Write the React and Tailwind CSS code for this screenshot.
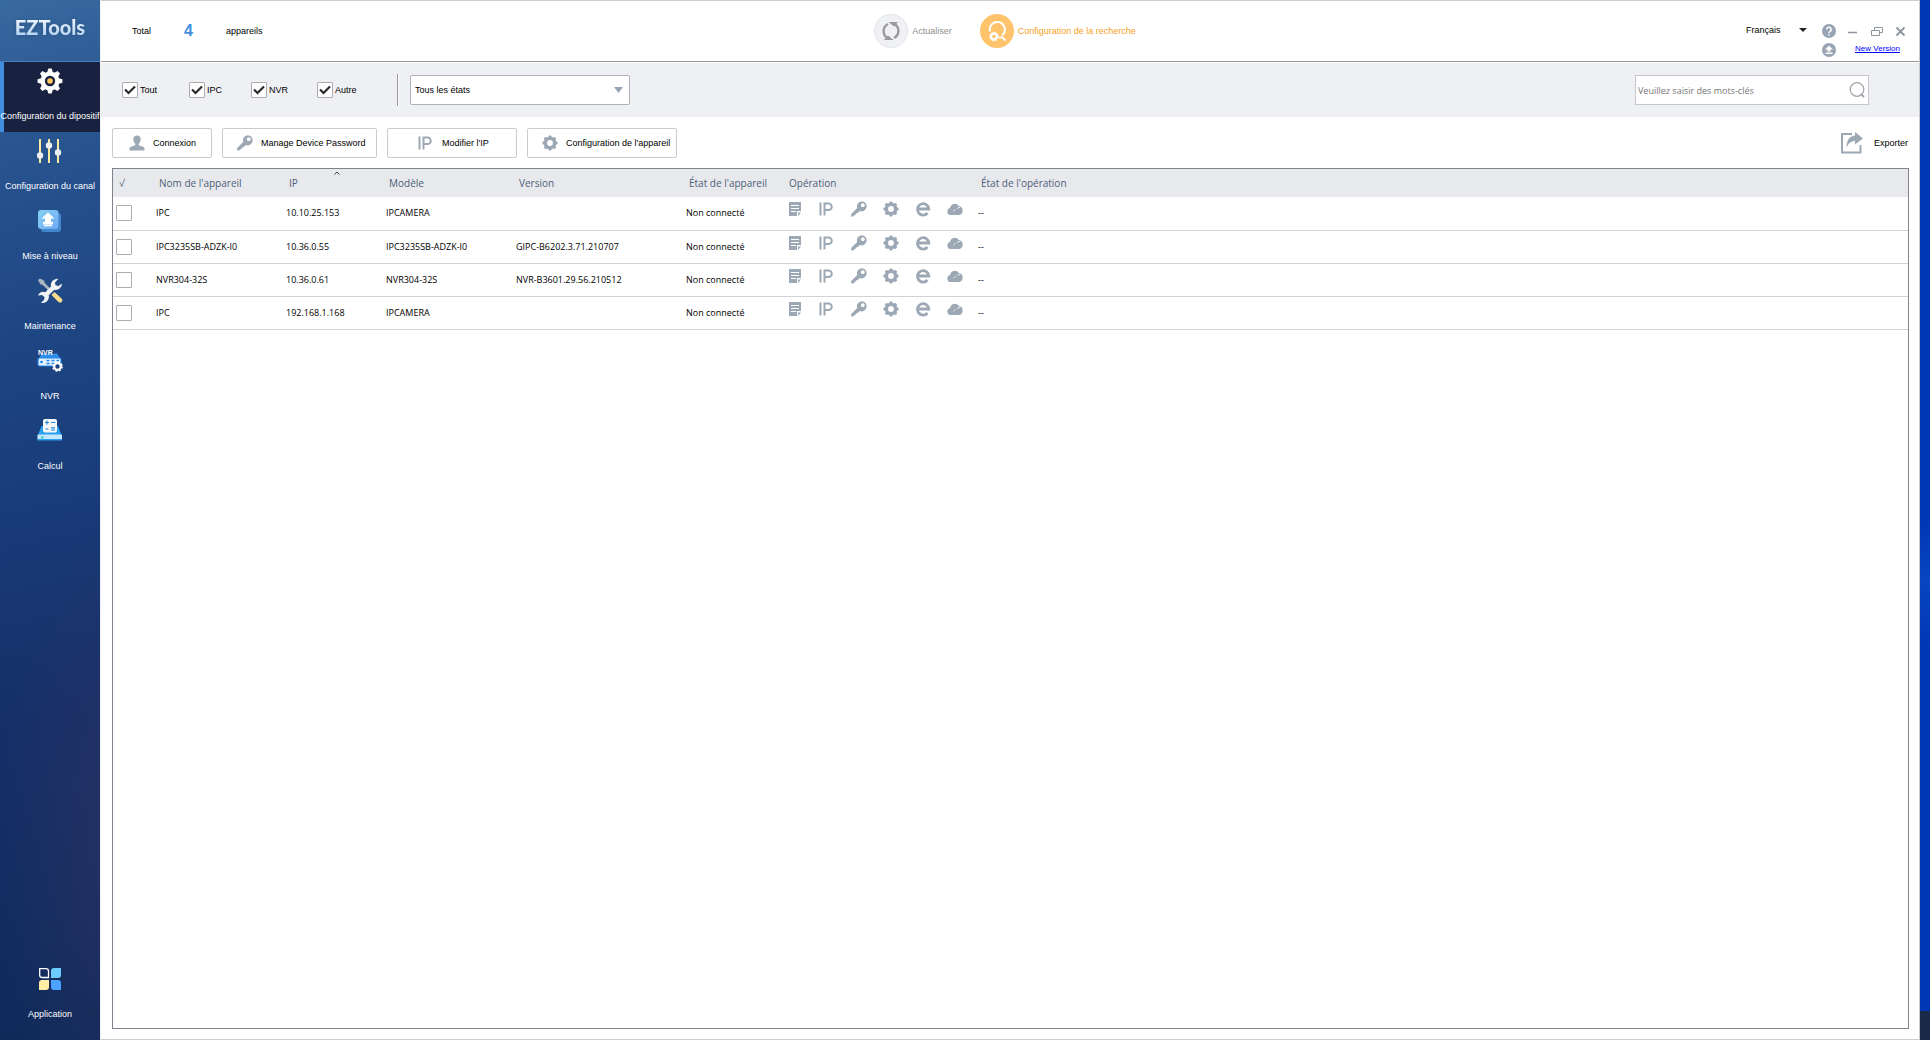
import { useState } from "react";

const DEVICES = [
  { id: 1, name: "IPC", ip: "10.10.25.153", model: "IPCAMERA", version: "" },
  { id: 2, name: "IPC3235SB-ADZK-I0", ip: "10.36.0.55", model: "IPC3235SB-ADZK-I0", version: "GIPC-B6202.3.71.210707" },
  { id: 3, name: "NVR304-32S", ip: "10.36.0.61", model: "NVR304-32S", version: "NVR-B3601.29.56.210512" },
  { id: 4, name: "IPC", ip: "192.168.1.168", model: "IPCAMERA", version: "" },
];

const TOOTH_ANGLES = [0, 45, 90, 135, 180, 225, 270, 315];

function GearNavIcon() {
  return (
    <svg className="size-[26px]" viewBox="0 0 26 26">
      <g fill="#fff">
        <circle cx="13" cy="13" r="9.500" />
        {TOOTH_ANGLES.map((angle) => (
          <path key={angle} d="M11.300 .6h3.400l1.300 4.400h-6z" transform={`rotate(${angle} 13 13)`} />
        ))}
      </g>
      <circle cx="13" cy="13" r="5.200" fill="#18213f" />
      <circle cx="13" cy="13" r="2.800" fill="#ffc95c" />
    </svg>
  );
}

function SlidersIcon() {
  return (
    <svg className="size-[26px]" viewBox="0 0 26 26">
      <g fill="#fbe9a0">
        <rect x="2" y="1" width="2" height="24" />
        <rect x="11" y="1" width="2" height="24" />
        <rect x="20" y="1" width="2" height="24" />
      </g>
      <g fill="#eceef2">
        <circle cx="3" cy="17.500" r="3.200" />
        <circle cx="12" cy="7.500" r="3.200" />
        <circle cx="21" cy="14.500" r="3.200" />
      </g>
    </svg>
  );
}

function UpgradeIcon() {
  return (
    <svg className="size-[26px]" viewBox="0 0 26 26">
      <defs>
        <linearGradient id="upgrade" x1="0" y1="0" x2="1" y2="1">
          <stop offset="0" stopColor="#86d3f2" />
          <stop offset="1" stopColor="#6fa8f5" />
        </linearGradient>
      </defs>
      <rect x="4" y="5" width="20" height="19" rx="3" fill="#4387cc" />
      <rect x="1" y="2" width="20.500" height="19" rx="3" fill="url(#upgrade)" />
      <path d="M11 4.500l6.500 6H14V14h2v2.500H6V14h2v-3.500H4.500z" fill="#fff" />
      <path d="M7 17.500h8" stroke="#fff" strokeWidth="1.500" />
    </svg>
  );
}

function ToolsIcon() {
  return (
    <svg className="size-[26px]" viewBox="0 0 26 26">
      <path d="M1 2l2-1.500 4 2 .8 2.600 6 6-2 2-6-6-2.600-.8z" fill="#a9b4c0" />
      <path d="M14.500 17l3-3 7 6.500a2 2 0 0 1-3 3.500z" fill="#fbdc8c" />
      <path
        d="M25 5.500l-3.500 2.500-3-.8-.5-2.800L21.300 1A6.200 6.200 0 0 0 14 8.500L8.300 14.200A6.200 6.200 0 0 0 1 17.500l4-.5 2.500 2-.3 2.800L4 24.800a6.200 6.200 0 0 0 7.700-7.500l5.600-5.600A6.200 6.200 0 0 0 25 5.500z"
        fill="#f1f2f4"
      />
    </svg>
  );
}

function NvrIcon() {
  return (
    <svg className="size-[26px]" viewBox="0 0 26 26">
      <path d="M5 5.500h15l4 6H.8z" fill="#2f8eea" />
      <text x="1" y="6.500" className="font-['Liberation_Sans'] text-[7px] font-bold" fill="#fff">NVR</text>
      <rect x="1" y="10" width="23" height="8" rx="1.500" fill="#e4f1ff" stroke="#1e83ea" strokeWidth="1.200" />
      <circle cx="4.500" cy="14" r="1.300" fill="#1e83ea" />
      <path d="M9.500 12.500h3m2 0h3m2 0h2.500M9.500 15.500h3m2 0h3" stroke="#1e83ea" strokeWidth="1.300" />
      <circle cx="20.500" cy="18.500" r="3.300" fill="#1a4080" stroke="#fff" strokeWidth="2.200" />
      <circle cx="20.500" cy="18.500" r="4.600" fill="none" stroke="#fff" strokeWidth="1.500" strokeDasharray="2 1.600" />
    </svg>
  );
}

function CalculIcon() {
  return (
    <svg className="size-[26px]" viewBox="0 0 26 26">
      <path d="M4.500 8h16.500l4 10H.5z" fill="#2ba0f0" />
      <rect x=".5" y="16.500" width="24.500" height="5.500" rx="1" fill="#c6e6fb" />
      <path d="M.5 21h24.500v1.500H.5z" fill="#2ba0f0" />
      <rect x="4" y="18.500" width="2.500" height="2" fill="#27d3b4" />
      <rect x="6" y="1" width="14" height="13.500" rx="2" fill="#f4f6f8" />
      <path d="M8 4.500h4M10 2.500v4M14 4.500h4.500M8.500 11h3M14 9.800h4M14 12h4" stroke="#2487d8" strokeWidth="1.200" />
    </svg>
  );
}

function AppsIcon() {
  return (
    <svg className="size-[26px]" viewBox="0 0 26 26">
      <path d="M2.700 2.700h6.300a2.500 2.500 0 0 1 2.500 2.500v6.300H5.200a2.500 2.500 0 0 1-2.500-2.500z" fill="none" stroke="#fff" strokeWidth="1.300" />
      <path d="M17 2h7v7a3 3 0 0 1-3 3h-7V5a3 3 0 0 1 3-3z" fill="#6ccbff" />
      <path d="M5 14h7v7a3 3 0 0 1-3 3H2v-7a3 3 0 0 1 3-3z" fill="#ffeda3" />
      <path d="M14 14h7a3 3 0 0 1 3 3v7h-7a3 3 0 0 1-3-3z" fill="#4ba3ff" />
    </svg>
  );
}

function UserIcon() {
  return (
    <svg className="size-4" viewBox="0 0 16 16" fill="currentColor">
      <path d="M8 .5c2.400 0 3.700 1.500 3.700 3.700 0 1.900-.7 3.500-1.900 4.300v1.700l4.700 1.700c.8.3 1 1 1 2v1.600H.5v-1.600c0-1 .2-1.700 1-2l4.700-1.700V8.500C5 7.700 4.300 6.100 4.300 4.200 4.300 2 5.600.5 8 .5z" />
    </svg>
  );
}

function KeyIcon() {
  return (
    <svg className="size-4" viewBox="0 0 16 16" fill="currentColor" fillRule="evenodd">
      <path d="M10.700 .2a5.100 5.100 0 1 1-1.900 9.900L6.500 12.300l-1.700.2-.3 1.500-1.600.4-.4 1.200H.2v-2.500l6-6.200A5.100 5.100 0 0 1 10.700.2zM11.800 2.300a1.900 1.900 0 1 0 .01 0z" />
    </svg>
  );
}

function IpIcon() {
  return (
    <svg className="h-4 w-[14px]" viewBox="0 0 14 16" fill="none" stroke="currentColor" strokeWidth="2">
      <path d="M1.500 1.500v13M5.500 14.500v-12h4a3.200 3.200 0 0 1 0 6.500h-4" />
    </svg>
  );
}

function CogIcon() {
  return (
    <svg className="size-4" viewBox="0 0 16 16" fill="currentColor">
      <circle cx="8" cy="8" r="4.500" fill="none" stroke="currentColor" strokeWidth="3.200" />
      {TOOTH_ANGLES.map((angle) => (
        <path key={angle} d="M7 .4h2l1.600 2.800H5.400z" transform={`rotate(${angle} 8 8)`} />
      ))}
    </svg>
  );
}

function NoteIcon() {
  return (
    <svg className="size-4" viewBox="0 0 16 16" fill="currentColor">
      <path d="M2 1h12v9h-4v5H2z" />
      <path d="M11 11.500h3L11 15z" />
      <path d="M4 4.500h8M4 7.500h8M4 10.500h5" stroke="#fff" strokeWidth="1" />
    </svg>
  );
}

function BrowserIcon() {
  return (
    <svg className="size-4" viewBox="0 0 16 16" fill="none" stroke="currentColor" strokeWidth="2.800">
      <path d="M2.500 8h11.300a5.700 5.700 0 1 0-1.300 4" />
    </svg>
  );
}

function CloudIcon() {
  return (
    <svg className="size-4" viewBox="0 0 16 16">
      <path d="M3.800 14a3.500 3.500 0 0 1-.8-6.900A4.800 4.800 0 0 1 11.800 5a4.600 4.600 0 0 1 .4 9z" fill="currentColor" />
      <path d="M6.500 10c1-.2 1.500-1 2-1.800M10 7.800c.8-.8 1.500-1.200 3-1.400" stroke="#fff" strokeWidth=".8" fill="none" />
    </svg>
  );
}

const NAV = [
  { label: "Configuration du dipositif", icon: GearNavIcon, active: true },
  { label: "Configuration du canal", icon: SlidersIcon },
  { label: "Mise à niveau", icon: UpgradeIcon },
  { label: "Maintenance", icon: ToolsIcon },
  { label: "NVR", icon: NvrIcon },
  { label: "Calcul", icon: CalculIcon },
];

const OPERATIONS = [
  { title: "Détails", icon: NoteIcon },
  { title: "Modifier l'IP", icon: IpIcon },
  { title: "Mot de passe", icon: KeyIcon },
  { title: "Configuration", icon: CogIcon },
  { title: "Navigateur", icon: BrowserIcon },
  { title: "Cloud", icon: CloudIcon },
];

function NavItem({ label, icon: Icon, active }) {
  return (
    <a
      href="#"
      className={
        active
          ? "relative flex h-[70px] flex-col items-center bg-[#18213f] pt-1.5"
          : "relative flex h-[70px] flex-col items-center pt-1.5"
      }
    >
      {active && <span className="absolute inset-y-0 left-0 w-1 bg-[#3f8ee0]" />}
      <Icon />
      <span className="relative mt-4 text-[9px] leading-3 whitespace-nowrap text-white">{label}</span>
    </a>
  );
}

function Sidebar() {
  return (
    <aside className="flex w-[100px] shrink-0 flex-col bg-[radial-gradient(ellipse_120px_330px_at_120%_82%,#37346388,transparent),linear-gradient(168deg,#38699f_0%,#28548f_14%,#1e4683_32%,#193b79_48%,#153069_68%,#0e2a59_100%)]">
      <div className="flex h-[62px] items-center justify-center border-b border-[#4a80bf] pb-2">
        <span className="bg-linear-to-b from-white to-[#a9cdf0] bg-clip-text font-['Lato'] text-[20px] leading-6 font-black text-transparent drop-shadow-sm">
          EZTools
        </span>
      </div>
      <nav className="flex grow flex-col">
        {NAV.map((item) => (
          <NavItem key={item.label} {...item} />
        ))}
        <div className="mt-auto pb-2.5">
          <NavItem label="Application" icon={AppsIcon} />
        </div>
      </nav>
    </aside>
  );
}

function CheckBox({ checked, onChange, label }) {
  return (
    <span className="relative flex size-4 shrink-0">
      <input
        type="checkbox"
        aria-label={label}
        checked={checked}
        onChange={onChange}
        className="size-4 appearance-none rounded-[1px] border border-[#adadb0] bg-white"
      />
      {checked && (
        <svg className="pointer-events-none absolute inset-0 size-4" viewBox="0 0 16 16">
          <path d="M3 7.500l3.500 3.500L13 4.500" fill="none" stroke="#2a2a2e" strokeWidth="2.200" />
        </svg>
      )}
    </span>
  );
}

function Header() {
  return (
    <header className="grid h-[62px] shrink-0 grid-cols-[1fr_auto_1fr] items-center border-t border-b border-t-[#cccccc] border-b-[#96969c]">
      <div className="flex items-center pl-[31px]">
        <span className="w-[52px]">Total</span>
        <span className="w-[42px] text-[16px] leading-5 font-bold text-[#3f8ee0]">4</span>
        <span>appareils</span>
      </div>

      <div className="flex items-center gap-7 pr-2.5">
        <button type="button" className="flex items-center gap-1 text-[#8e8e8e]">
          <svg className="size-[34px]" viewBox="0 0 34 34">
            <circle cx="17" cy="17" r="16.500" fill="#f0f1f5" stroke="#e2e3e8" />
            <path d="M14 10a8 8 0 0 0-.5 14M20 24a8 8 0 0 0 .5-14" fill="none" stroke="#9a9a9a" strokeWidth="2.400" />
            <path d="M14.500 8h9.500l-4 4.500zM19.500 26h-9.500l4-4.500z" fill="#9a9a9a" />
          </svg>
          Actualiser
        </button>
        <button type="button" className="flex items-center gap-1 text-[#f5a122]">
          <svg className="size-[34px]" viewBox="0 0 34 34" fill="none" stroke="#fff" strokeWidth="2">
            <circle cx="17" cy="17" r="17" fill="#ffc36b" stroke="none" />
            <path d="M10 17.500a7.600 7.600 0 1 1 12 4M19 23.500h3.500l3 3" />
            <circle cx="14" cy="22.500" r="3" strokeWidth="2.400" />
            <circle cx="14" cy="22.500" r="4.300" strokeWidth="1" strokeDasharray="2 1.400" />
          </svg>
          Configuration de la recherche
        </button>
      </div>

      <div className="flex items-start justify-end pt-[18px] pr-[11px]">
        <div className="relative flex items-center">
          <select aria-label="Langue" className="w-[61px] appearance-none bg-transparent leading-3" defaultValue="fr">
            <option value="fr">Français</option>
            <option value="en">English</option>
          </select>
          <svg className="pointer-events-none absolute right-0 h-1 w-2" viewBox="0 0 8 4">
            <path d="M0 0h8l-4 4z" fill="#222" />
          </svg>
        </div>
        <div className="ml-[15px] flex flex-col gap-[5px] text-[#98a4b3]">
          <button type="button" aria-label="Aide">
            <svg className="size-[14px]" viewBox="0 0 14 14">
              <circle cx="7" cy="7" r="7" fill="currentColor" />
              <path d="M4.800 5.500a2.200 2.200 0 1 1 3.300 1.900c-.8.4-1.100.7-1.100 1.500M7 10v1.500" fill="none" stroke="#fff" strokeWidth="1.500" />
            </svg>
          </button>
          <button type="button" aria-label="Mise à jour">
            <svg className="size-[14px]" viewBox="0 0 14 14">
              <circle cx="7" cy="7" r="7" fill="currentColor" />
              <path d="M7 2.500l4 4H8.500v2h-3v-2H3zM3.500 9.500h7V11h-7z" fill="#fff" />
            </svg>
          </button>
        </div>
        <div className="flex flex-col items-end gap-[5px]">
          <div className="flex gap-2.5 text-[#8f959c]">
            <button type="button" aria-label="Réduire">
              <svg className="size-[14px]" viewBox="0 0 14 14"><path d="M2 8.500h9" stroke="currentColor" strokeWidth="1.500" /></svg>
            </button>
            <button type="button" aria-label="Restaurer">
              <svg className="size-[14px]" viewBox="0 0 14 14" fill="none" stroke="currentColor">
                <path d="M1.500 6.500h8v5h-8zM4.500 6.500v-3h8v5h-3" />
              </svg>
            </button>
            <button type="button" aria-label="Fermer">
              <svg className="size-[14px]" viewBox="0 0 14 14">
                <path d="M2.500 3.500l8 8M10.500 3.500l-8 8" stroke="currentColor" strokeWidth="1.800" />
              </svg>
            </button>
          </div>
          <a href="#" className="mr-2 ml-[19px] text-[8px] leading-3 text-[#0000ff] underline">New Version</a>
        </div>
      </div>
    </header>
  );
}

function Filters() {
  const [types, setTypes] = useState({ Tout: true, IPC: true, NVR: true, Autre: true });

  return (
    <section className="mt-px flex h-[54px] shrink-0 items-center bg-[#eff0f4] pr-[50px] pl-[21px]">
      <div className="grid grid-cols-[67px_62px_66px_80px]">
        {Object.keys(types).map((type) => (
          <label key={type} className="flex items-center gap-0.5">
            <CheckBox
              label={type}
              checked={types[type]}
              onChange={() => setTypes((old) => ({ ...old, [type]: !old[type] }))}
            />
            {type}
          </label>
        ))}
      </div>
      <div className="h-8 w-0.5 border-r border-l border-r-white border-l-[#98989c]" />
      <div className="relative ml-[11px] flex items-center">
        <select
          aria-label="État"
          className="h-[30px] w-[220px] appearance-none rounded-xs border border-[#b0b1b6] bg-white pl-1"
          defaultValue="all"
        >
          <option value="all">Tous les états</option>
          <option value="online">Connecté</option>
          <option value="offline">Non connecté</option>
        </select>
        <svg className="pointer-events-none absolute right-[7px] h-1.5 w-[9px]" viewBox="0 0 9 6">
          <path d="M0 0h9L4.500 6z" fill="#98a4b3" />
        </svg>
      </div>
      <div className="relative ml-auto flex items-center">
        <input
          type="text"
          aria-label="Recherche"
          placeholder="Veuillez saisir des mots-clés"
          className="h-[30px] w-[234px] border border-[#c6c7cb] bg-white pr-6 pl-0.5 font-['Open_Sans',sans-serif] placeholder:text-[#777]"
        />
        <svg className="pointer-events-none absolute right-1 size-4" viewBox="0 0 16 16" fill="none" stroke="#a3a7ad" strokeWidth="1.300">
          <circle cx="8" cy="7.500" r="6.800" />
          <path d="M12 12l3 3" strokeWidth="2" />
        </svg>
      </div>
    </section>
  );
}

function ToolButton({ icon: Icon, className, children }) {
  return (
    <button type="button" className={`flex h-[30px] items-center rounded-xs border border-[#cbcbcd] bg-white ${className}`}>
      <span className="text-[#9da8b5]"><Icon /></span>
      {children}
    </button>
  );
}

function Toolbar() {
  return (
    <section className="flex h-[51px] shrink-0 items-center gap-2.5 pr-[11px] pl-[11px]">
      <ToolButton icon={UserIcon} className="w-[100px] gap-2 pl-4">Connexion</ToolButton>
      <ToolButton icon={KeyIcon} className="w-[155px] gap-2 pl-3.5">Manage Device Password</ToolButton>
      <ToolButton icon={IpIcon} className="w-[130px] gap-2.5 pl-[30px]">Modifier l'IP</ToolButton>
      <ToolButton icon={CogIcon} className="w-[150px] gap-2 pl-3.5">Configuration de l'appareil</ToolButton>
      <button type="button" className="ml-auto flex items-center gap-2.5">
        <svg className="h-[22px] w-6" viewBox="0 0 24 22" fill="#9da8b5">
          <path d="M12 2H2v18.500h18.500V13" fill="none" stroke="#9da8b5" strokeWidth="2" />
          <path d="M15 0l8 6.500-8 6V9c-4 0-6.500 2-8.500 7C6.500 9 9 4 15 3.500z" />
        </svg>
        Exporter
      </button>
    </section>
  );
}

function DeviceTable() {
  const [selected, setSelected] = useState([]);

  function toggle(id) {
    setSelected((old) => (old.includes(id) ? old.filter((item) => item !== id) : [...old, id]));
  }

  return (
    <section className="mx-2.5 mb-2.5 ml-[11px] grow border border-[#80828e]">
      <table className="w-full table-fixed border-collapse font-['Open_Sans',sans-serif] text-[9px] leading-3">
        <colgroup>
          <col className="w-10" />
          <col className="w-[130px]" />
          <col className="w-[100px]" />
          <col className="w-[130px]" />
          <col className="w-[170px]" />
          <col className="w-[100px]" />
          <col className="w-[192px]" />
          <col />
        </colgroup>
        <thead className="text-[10px]">
          <tr className="h-7 bg-[#e8e9ed] text-left text-[#4e6078] *:pl-1.5 *:font-normal">
            <th>√</th>
            <th>Nom de l'appareil</th>
            <th className="relative">
              IP
              <svg className="absolute top-0.5 left-[51px] h-1 w-1.5" viewBox="0 0 6 4">
                <path d="M.5 3.500L3 1l2.500 2.500" fill="none" stroke="#444" />
              </svg>
            </th>
            <th>Modèle</th>
            <th>Version</th>
            <th>État de l'appareil</th>
            <th>Opération</th>
            <th>État de l'opération</th>
          </tr>
        </thead>
        <tbody>
          {DEVICES.map((device) => (
            <tr key={device.id} className="h-[33px] border-b border-[#d2d2d4] *:pl-[3px]">
              <td>
                <CheckBox
                  label={`Sélectionner ${device.name} ${device.ip}`}
                  checked={selected.includes(device.id)}
                  onChange={() => toggle(device.id)}
                />
              </td>
              <td>{device.name}</td>
              <td>{device.ip}</td>
              <td>{device.model}</td>
              <td>{device.version}</td>
              <td>Non connecté</td>
              <td>
                <div className="mb-2 flex gap-4 pl-px text-[#9da8b5]">
                  {OPERATIONS.map(({ title, icon: Icon }) => (
                    <button key={title} type="button" aria-label={title} className="flex size-4">
                      <Icon />
                    </button>
                  ))}
                </div>
              </td>
              <td>--</td>
            </tr>
          ))}
        </tbody>
      </table>
    </section>
  );
}

export default function App() {
  return (
    <div className="flex min-h-screen bg-white font-['Liberation_Sans',Arial,sans-serif] text-[9px] leading-3 text-black">
      <Sidebar />
      <main className="flex min-w-0 grow flex-col border-r border-b border-l border-[#cccccc] border-l-[#f0f0f2]">
        <Header />
        <Filters />
        <Toolbar />
        <DeviceTable />
      </main>
      <div className="flex w-2.5 shrink-0 flex-col bg-[linear-gradient(to_bottom,#0037b4_50%,#0845c0_56%,#0037b4_62%)]">
        <div className="mt-auto h-[29px] bg-[#1a2947]" />
      </div>
    </div>
  );
}
